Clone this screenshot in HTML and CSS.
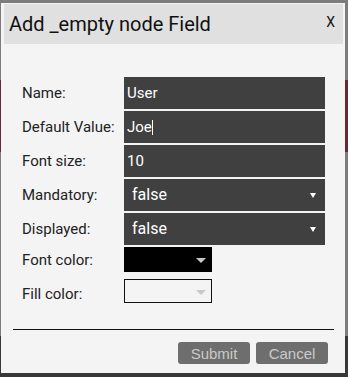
FILE: index.html
```html
<!DOCTYPE html>
<html lang="en">
<head>
  <meta charset="UTF-8">
  <meta name="viewport" content="width=device-width, initial-scale=1.0">
  <title>Add _empty node Field</title>

  <link rel="stylesheet" href="styles.css">
</head>
<body>

  <div class="dialog">
    <!-- Title bar -->
    <div class="titlebar">
      <span class="title">Add _empty node Field</span>
      <span class="close">X</span>
    </div>

    <div class="content">
      <!-- Fields -->
      <div class="form">
        <label>Name:</label>
        <div class="field">User</div>

        <label>Default Value:</label>
        <div class="field">Joe<span class="caret"></span></div>

        <label>Font size:</label>
        <div class="field">10</div>

        <label>Mandatory:</label>
        <div class="field select">false</div>

        <label>Displayed:</label>
        <div class="field select">false</div>

        <label>Font color:</label>
        <div class="swatch dark"></div>

        <label class="last">Fill color:</label>
        <div class="swatch light last"></div>
      </div>

      <hr>

      <div class="actions">
        <button>Submit</button>
        <button>Cancel</button>
      </div>
    </div>
  </div>

</body>
</html>
```

FILE: styles.css
```css
* {
  box-sizing: border-box;
}

body {
  margin: 0;
  font-family: Roboto, 'Noto Sans', sans-serif;
  background: linear-gradient(to bottom, #7c7c7c 0, #7c7c7c 80px, #6a2735 80px, #6a2735 152px, #7c7c7c 152px, #7c7c7c 336px, #383838 336px);
  height: 377px;
  overflow: hidden;
}

.dialog {
  margin: 3px 0 0 1px;
  width: 344px;
  height: 370px;
  padding: 1px 2px 0 3px;
  background: #f4f4f4;
  display: flex;
  flex-direction: column;
}

.titlebar {
  height: 40px;
  background: #e0e0e0;
  display: flex;
  justify-content: space-between;
  align-items: center;
  padding: 0 8px 0 5px;
  color: #111;
}

.title {
  font-size: 20px;
  line-height: 24px;
}

.close {
  align-self: flex-start;
  margin-top: 10px;
  font-size: 14px;
  line-height: 16px;
}

.content {
  padding: 0 9px;
}

.form {
  margin-top: 33px;
  padding-left: 9px;
  display: grid;
  grid-template-columns: 102px 201px;
  grid-template-rows: repeat(5, 32px) 25px 29px;
  row-gap: 2px;
  align-items: center;
}

.form label {
  font-size: 15px;
  color: #222;
}

.form .last {
  align-self: end;
}

.field {
  position: relative;
  height: 32px;
  background: #404040;
  color: #fff;
  font-size: 15px;
  line-height: 32px;
  padding-left: 3px;
}

.caret {
  display: inline-block;
  width: 1px;
  height: 15px;
  background: #fff;
  vertical-align: -3px;
}

.select {
  font-size: 16px;
  padding-left: 8px;
}

.select::after {
  content: "";
  position: absolute;
  right: 9px;
  top: 14px;
  border-left: 3px solid transparent;
  border-right: 3px solid transparent;
  border-top: 5px solid #fff;
}

.swatch {
  position: relative;
  width: 88px;
  height: 25px;
}

.swatch::after {
  content: "";
  position: absolute;
  right: 6px;
  top: 11px;
  border-left: 5px solid transparent;
  border-right: 5px solid transparent;
  border-top: 5px solid #c8c8c8;
}

.dark {
  background: #000;
}

.light {
  height: 24px;
  border: 1px solid #111;
}

.light::after {
  top: 10px;
  right: 5px;
}

hr {
  margin: 26px 0 0;
  border: none;
  border-top: 1px solid #111;
}

.actions {
  display: flex;
  justify-content: flex-end;
  gap: 6px;
  margin: 12px 6px 0 0;
}

button {
  width: 72px;
  height: 22px;
  padding: 0;
  border: none;
  border-radius: 3px;
  background: #6e6e6e;
  color: #cacaca;
  font-family: 'Liberation Sans', Arial, sans-serif;
  font-size: 15px;
}
```
